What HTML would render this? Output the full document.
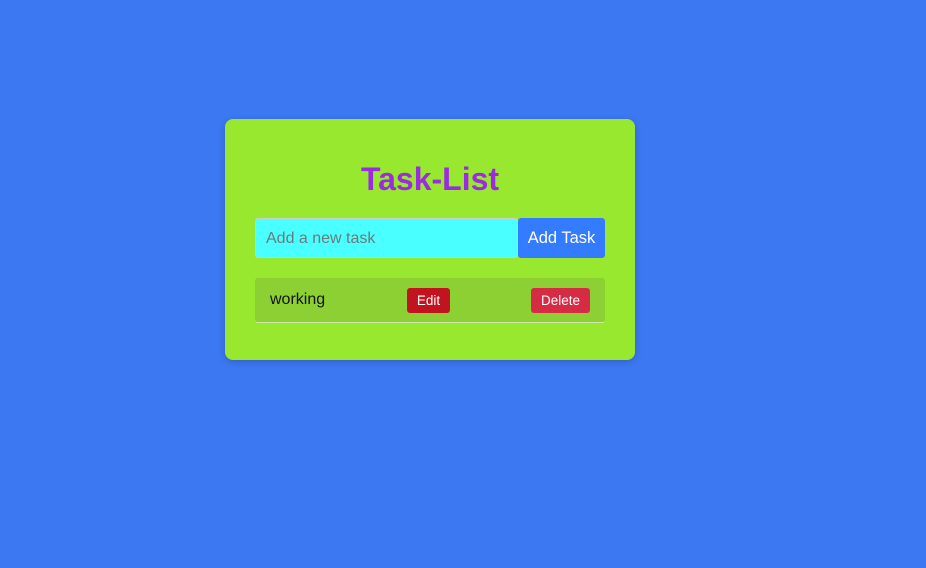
<!DOCTYPE html>
<html><head><style>
body{margin:0;width:926px;height:568px;background:#3d78f3;font-family:"Liberation Sans",sans-serif;position:relative}
.card{position:absolute;left:225px;top:119px;width:410px;height:241px;background:#98e830;border-radius:8px;box-shadow:0 2px 8px rgba(0,0,0,.2)}
h1{position:absolute;left:0;width:410px;top:161px;margin:0;text-align:center;color:#9b2ae0;font-size:32px;font-weight:bold}
.in{position:absolute;left:255px;top:218px;width:261px;height:38px;background:#4affff;border:1px solid #c8d0c8;border-radius:3px;box-sizing:border-box;width:263px;height:40px;font-size:16px;color:#6c7a7a;padding:11px 0 0 10px}
.add{position:absolute;left:518px;top:218px;width:87px;height:40px;background:#337bff;border-radius:3px;color:#fff;font-size:16.5px;text-align:center;line-height:40px}
.row{position:absolute;left:255px;top:278px;width:350px;height:45px;background:#8dd033;border-radius:3px;border-bottom:1px solid #cfe8a8;box-sizing:border-box}
.w{position:absolute;left:15px;top:13px;font-size:16px;color:#111}
.b{position:absolute;top:10px;height:25px;border-radius:3px;color:#fff;font-size:13.5px;text-align:center;line-height:25px}
</style></head><body>
<div class="card"></div>
<h1 style="left:225px;top:161px">Task-List</h1>
<div class="in">Add a new task</div>
<div class="add">Add Task</div>
<div class="row"><span class="w">working</span>
<div class="b" style="left:152px;width:43px;background:#c2141f">Edit</div>
<div class="b" style="left:276px;width:59px;background:#d62b45">Delete</div></div>
</body></html>
